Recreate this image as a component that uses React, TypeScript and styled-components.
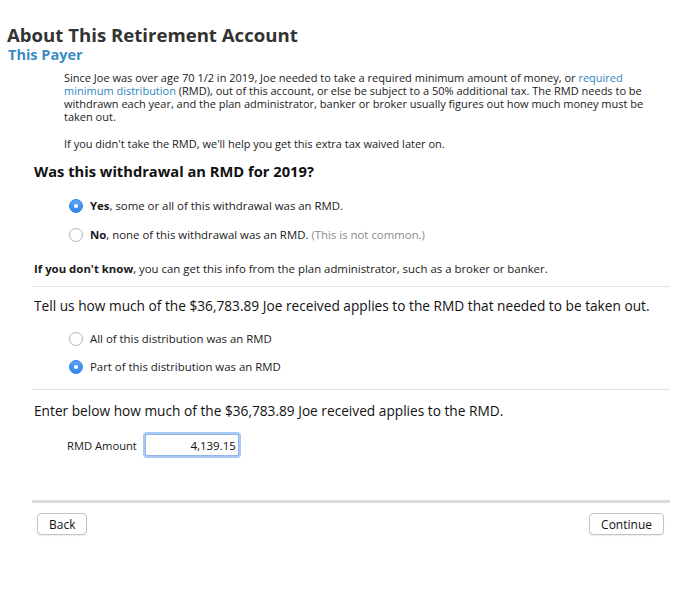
import React, { useState } from 'react'
import styled, { createGlobalStyle } from 'styled-components'

const GlobalStyle = createGlobalStyle`
  html, body {
    margin: 0;
    padding: 0;
    background: #ffffff;
  }
  body {
    font-family: 'Open Sans', 'DejaVu Sans', sans-serif;
    color: #1a1a1a;
  }
`

const Page = styled.div`
  width: 687px;
  height: 590px;
  padding: 24px 0 0 0;
  box-sizing: border-box;
  overflow: hidden;
`

const Title = styled.h1`
  margin: 0 0 0 7px;
  font-size: 18.6px;
  line-height: 22px;
  font-weight: 700;
  color: #333333;
`

const Subtitle = styled.h2`
  margin: 0 0 0 8px;
  font-size: 14.5px;
  line-height: 17px;
  font-weight: 700;
  color: #3a8cc4;
`

const Body = styled.div`
  margin: 0 17px 0 32px;
  display: flex;
  flex-direction: column;
`

const Intro = styled.p<{ $top: number }>`
  margin: ${p => p.$top}px 0 0 64px;
  width: 582px;
  font-size: 11px;
  line-height: 13px;
`

const Link = styled.a`
  color: #2f86c3;
  text-decoration: none;
`

const Note = styled.p<{ $top: number }>`
  margin: ${p => p.$top}px 0 0 2px;
  font-size: 11.4px;
  line-height: 13px;
`

const Question = styled.h3`
  margin: 12px 0 0 2px;
  font-size: 14.7px;
  line-height: 18px;
  font-weight: 700;
  color: #111111;
`

const Options = styled.div<{ $top: number; $gap: number }>`
  display: flex;
  flex-direction: column;
  gap: ${p => p.$gap}px;
  margin: ${p => p.$top}px 0 0 37px;
`

const OptionRow = styled.label`
  display: flex;
  align-items: center;
  gap: 7px;
  font-size: 11.4px;
  line-height: 14px;
  cursor: pointer;
`

const Radio = styled.span<{ $checked: boolean }>`
  width: 14px;
  height: 14px;
  border-radius: 50%;
  box-sizing: border-box;
  flex-shrink: 0;
  display: flex;
  align-items: center;
  justify-content: center;
  background: ${p => (p.$checked ? 'linear-gradient(#5aa6f5, #2f86ee)' : '#ffffff')};
  border: 1px solid ${p => (p.$checked ? '#2f7fe0' : '#b4b4b4')};
  &::after {
    content: '';
    width: 4px;
    height: 4px;
    border-radius: 50%;
    background: #ffffff;
    display: ${p => (p.$checked ? 'block' : 'none')};
  }
`

const Muted = styled.span`
  color: #8a8a8a;
`

const Divider = styled.hr<{ $top: number; $thick?: boolean }>`
  margin: ${p => p.$top}px 0 0 0;
  border: none;
  height: ${p => (p.$thick ? 3 : 1)}px;
  background: ${p => (p.$thick ? '#dcdcdc' : '#e2e2e2')};
`

const Prompt = styled.p<{ $top: number }>`
  margin: ${p => p.$top}px 0 0 2px;
  font-size: 13.7px;
  line-height: 16px;
  color: #111111;
`

const AmountRow = styled.div`
  display: flex;
  align-items: center;
  gap: 8px;
  margin: 15px 0 0 35px;
`

const AmountLabel = styled.span`
  font-size: 11.2px;
`

const AmountInput = styled.input`
  width: 94px;
  height: 22px;
  box-sizing: border-box;
  border: 1px solid #8fb6e8;
  box-shadow: 0 0 0 2px #a9c9f2;
  border-radius: 2px;
  text-align: right;
  padding: 0 2px;
  font-family: 'Open Sans', 'DejaVu Sans', sans-serif;
  font-size: 11.5px;
  color: #111111;
  outline: none;
`

const Footer = styled.div`
  display: flex;
  justify-content: space-between;
  margin: 10px 6px 0 5px;
`

const Button = styled.button`
  height: 22px;
  padding: 0 11px;
  background: #ffffff;
  border: 1px solid #c4c4c4;
  border-radius: 4px;
  box-shadow: 0 1px 1px rgba(0, 0, 0, 0.08);
  font-family: 'Open Sans', 'DejaVu Sans', sans-serif;
  font-size: 12px;
  color: #111111;
`

export default function App() {
  const [rmd, setRmd] = useState('yes')
  const [part, setPart] = useState('part')
  const [amount, setAmount] = useState('4,139.15')

  return (
    <Page>
      <GlobalStyle />
      <Title>About This Retirement Account</Title>
      <Subtitle>This Payer</Subtitle>
      <Intro $top={8}>
        Since Joe was over age 70 1/2 in 2019, Joe needed to take a required minimum amount of money, or{' '}
        <Link href="#">required minimum distribution</Link> (RMD), out of this account, or else be subject to a
        50% additional tax. The RMD needs to be withdrawn each year, and the plan administrator, banker or broker
        usually figures out how much money must be taken out.
      </Intro>
      <Intro $top={14}>If you didn't take the RMD, we'll help you get this extra tax waived later on.</Intro>
      <Body>
        <Question>Was this withdrawal an RMD for 2019?</Question>
        <Options $top={19} $gap={15}>
          <OptionRow onClick={() => setRmd('yes')}>
            <Radio $checked={rmd === 'yes'} />
            <span>
              <b>Yes</b>, some or all of this withdrawal was an RMD.
            </span>
          </OptionRow>
          <OptionRow onClick={() => setRmd('no')}>
            <Radio $checked={rmd === 'no'} />
            <span>
              <b>No</b>, none of this withdrawal was an RMD. <Muted>(This is not common.)</Muted>
            </span>
          </OptionRow>
        </Options>
        <Note $top={20}>
          <b>If you don't know</b>, you can get this info from the plan administrator, such as a broker or banker.
        </Note>
        <Divider $top={11} />
        <Prompt $top={11}>
          Tell us how much of the $36,783.89 Joe received applies to the RMD that needed to be taken out.
        </Prompt>
        <Options $top={18} $gap={14}>
          <OptionRow onClick={() => setPart('all')}>
            <Radio $checked={part === 'all'} />
            <span>All of this distribution was an RMD</span>
          </OptionRow>
          <OptionRow onClick={() => setPart('part')}>
            <Radio $checked={part === 'part'} />
            <span>Part of this distribution was an RMD</span>
          </OptionRow>
        </Options>
        <Divider $top={15} />
        <Prompt $top={13}>Enter below how much of the $36,783.89 Joe received applies to the RMD.</Prompt>
        <AmountRow>
          <AmountLabel>RMD Amount</AmountLabel>
          <AmountInput value={amount} onChange={e => setAmount(e.target.value)} />
        </AmountRow>
        <Divider $top={44} $thick />
        <Footer>
          <Button>Back</Button>
          <Button>Continue</Button>
        </Footer>
      </Body>
    </Page>
  )
}
